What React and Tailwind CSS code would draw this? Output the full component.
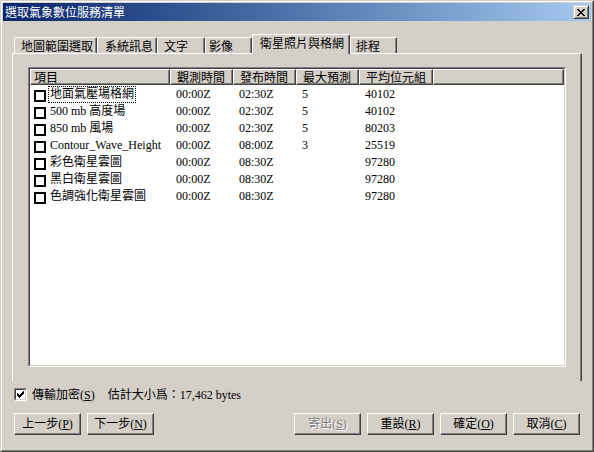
import React from "react";

const FONT = "font-['Liberation_Serif','Noto_Sans_CJK_TC',serif]";
const CJK = "font-['Noto_Sans_CJK_TC','Liberation_Sans',sans-serif]";

const rows = [
  ["地面氣壓場格網", "00:00Z", "02:30Z", "5", "40102"],
  ["500 mb 高度場", "00:00Z", "02:30Z", "5", "40102"],
  ["850 mb 風場", "00:00Z", "02:30Z", "5", "80203"],
  ["Contour_Wave_Height", "00:00Z", "08:00Z", "3", "25519"],
  ["彩色衛星雲圖", "00:00Z", "08:30Z", "", "97280"],
  ["黑白衛星雲圖", "00:00Z", "08:30Z", "", "97280"],
  ["色調強化衛星雲圖", "00:00Z", "08:30Z", "", "97280"],
];

const cols = [
  { label: "項目", w: "w-[140px]", pl: "pl-[3px]" },
  { label: "觀測時間", w: "w-[63px]", pl: "pl-[6px]" },
  { label: "發布時間", w: "w-[63px]", pl: "pl-[6px]" },
  { label: "最大預測", w: "w-[63px]", pl: "pl-[6px]" },
  { label: "平均位元組", w: "w-[74px]", pl: "pl-[6px]" },
];

const headCell =
  "h-[16px] border border-t-white border-l-white border-r-[#404040] border-b-[#404040] shadow-[inset_-1px_-1px_0_#808080] bg-[#d4d0c8] flex items-center shrink-0";

function Tab({ label, w, pl = "pl-[6px]", selected }) {
  return (
    <div
      className={`${w} ${pl} ${
        selected ? "h-[20px] pt-0 bg-[#d4d0c8]" : "h-[16px] mb-px"
      } shrink-0 border-l border-t border-r border-l-white border-t-white border-r-[#404040] shadow-[inset_-1px_0_0_#808080] rounded-tl-[2px] rounded-tr-[2px] text-[12px] leading-[16px] text-black ${CJK} whitespace-nowrap`}
    >
      {label}
    </div>
  );
}

function Button({ children, disabled }) {
  return (
    <div
      className={`w-[67px] h-[22px] border border-t-white border-l-white border-r-[#404040] border-b-[#404040] shadow-[inset_-1px_-1px_0_#808080] flex items-center justify-center text-[12px] ${FONT} ${
        disabled ? "text-[#808080] [text-shadow:1px_1px_0_#ffffff]" : "text-black"
      }`}
    >
      {children}
    </div>
  );
}

function ListCheck() {
  return <div className="w-[12px] h-[12px] border-2 border-black bg-white shrink-0 mt-[4px] ml-[4px]" />;
}

export default function App() {
  return (
    <div className="w-[594px] h-[452px] bg-[#d4d0c8] border border-t-[#d4d0c8] border-l-[#d4d0c8] border-r-[#404040] border-b-[#404040] overflow-hidden">
      <div className="w-full h-full border border-t-white border-l-white border-r-[#808080] border-b-[#808080] p-px flex flex-col">
        {/* Title bar */}
        <div className="h-[18px] shrink-0 bg-linear-to-r from-[#0a246a] to-[#a6caf0] flex items-center justify-between pl-[2px] pr-[2px]">
          <span className={`text-white text-[12px] leading-[14px] ${CJK}`}>選取氣象數位服務清單</span>
          <div className="w-[16px] h-[14px] bg-[#d4d0c8] border border-t-[#d4d0c8] border-l-[#d4d0c8] border-r-[#404040] border-b-[#404040] shadow-[inset_1px_1px_0_#ffffff,inset_-1px_-1px_0_#808080] flex items-center justify-center">
            <svg width="8" height="7" viewBox="0 0 8 7" shapeRendering="crispEdges">
              <path
                d="M0 0h2v1h1v1h2V1h1V0h2v1H7v1H6v1H5v1h1v1h1v1h1v1H6V6H5V5H3v1H2v1H0V6h1V5h1V4h1V3H2V2H1V1H0z"
                fill="#000"
              />
            </svg>
          </div>
        </div>

        {/* Tabs */}
        <div className="mt-[13px] ml-[11px] -mb-px flex items-end h-[20px] relative z-10">
          <Tab label="地圖範圍選取" w="w-[83px]" />
          <Tab label="系統訊息" w="w-[60px]" pl="pl-[7px]" />
          <Tab label="文字" w="w-[48px]" />
          <Tab label="影像" w="w-[47px]" pl="pl-[3px]" />
          <Tab label="衛星照片與格網" w="w-[98px]" pl="pl-[7px]" selected />
          <Tab label="排程" w="w-[47px]" pl="pl-[5px]" />
        </div>

        {/* Panel */}
        <div className="ml-[9px] w-[570px] shrink-0 border-l border-t border-r border-l-white border-t-white border-r-[#404040] shadow-[inset_-1px_0_0_#808080] pl-[15px] pt-[13px] pb-[14px]">
          <div className="w-[538px] h-[300px] border border-t-[#808080] border-l-[#808080] border-r-white border-b-white">
            <div className="w-full h-full border border-t-[#404040] border-l-[#404040] border-r-[#d4d0c8] border-b-[#d4d0c8] bg-white overflow-hidden">
              {/* Header */}
              <div className={`flex text-[12px] text-black ${CJK}`}>
                {cols.map((c) => (
                  <div key={c.label} className={`${headCell} ${c.w} ${c.pl}`}>
                    {c.label}
                  </div>
                ))}
                <div className={`${headCell} flex-1`} />
              </div>
              {/* Rows */}
              <div className={`pt-px text-[12px] text-black ${FONT}`}>
                {rows.map((r, i) => (
                  <div key={i} className="flex h-[17px] leading-[17px]">
                    <div className="w-[140px] shrink-0 flex items-start">
                      <ListCheck />
                      <span
                        className={`ml-[2px] px-[2px] h-[17px] whitespace-nowrap ${
                          i === 0 ? "outline outline-1 outline-dotted outline-black -outline-offset-1" : ""
                        }`}
                      >
                        {r[0]}
                      </span>
                    </div>
                    <div className="w-[63px] shrink-0 pl-[6px]">{r[1]}</div>
                    <div className="w-[63px] shrink-0 pl-[6px]">{r[2]}</div>
                    <div className="w-[63px] shrink-0 pl-[6px]">{r[3]}</div>
                    <div className="w-[74px] shrink-0 pl-[6px]">{r[4]}</div>
                  </div>
                ))}
              </div>
            </div>
          </div>
        </div>

        {/* Encrypt row */}
        <div className={`mt-[7px] ml-[11px] h-[13px] flex items-center text-[12px] text-black ${FONT}`}>
          <div className="w-[13px] h-[13px] border border-t-[#808080] border-l-[#808080] border-r-white border-b-white shrink-0">
            <div className="w-full h-full border border-t-[#404040] border-l-[#404040] border-r-[#d4d0c8] border-b-[#d4d0c8] bg-white flex items-center justify-center">
              <svg width="7" height="7" viewBox="0 0 7 7" shapeRendering="crispEdges">
                <path
                  d="M6 0h1v3H6v1H5v1H4v1H3v1H2V6H1V5H0V2h1v1h1v1h1V3h1V2h1V1h1z"
                  fill="#000"
                />
              </svg>
            </div>
          </div>
          <span className="ml-[5px] whitespace-nowrap">
            傳輸加密(<u>S</u>)
          </span>
          <span className="ml-[13px] whitespace-nowrap">估計大小爲：17,462 bytes</span>
        </div>

        {/* Buttons */}
        <div className="mt-[12px] mx-[11px] flex justify-between">
          <div className="flex gap-[6px]">
            <Button>
              上一步(<u>P</u>)
            </Button>
            <Button>
              下一步(<u>N</u>)
            </Button>
          </div>
          <div className="flex gap-[6px]">
            <Button disabled>
              寄出(<u>S</u>)
            </Button>
            <Button>
              重設(<u>R</u>)
            </Button>
            <Button>
              確定(<u>O</u>)
            </Button>
            <Button>
              取消(<u>C</u>)
            </Button>
          </div>
        </div>
      </div>
    </div>
  );
}
